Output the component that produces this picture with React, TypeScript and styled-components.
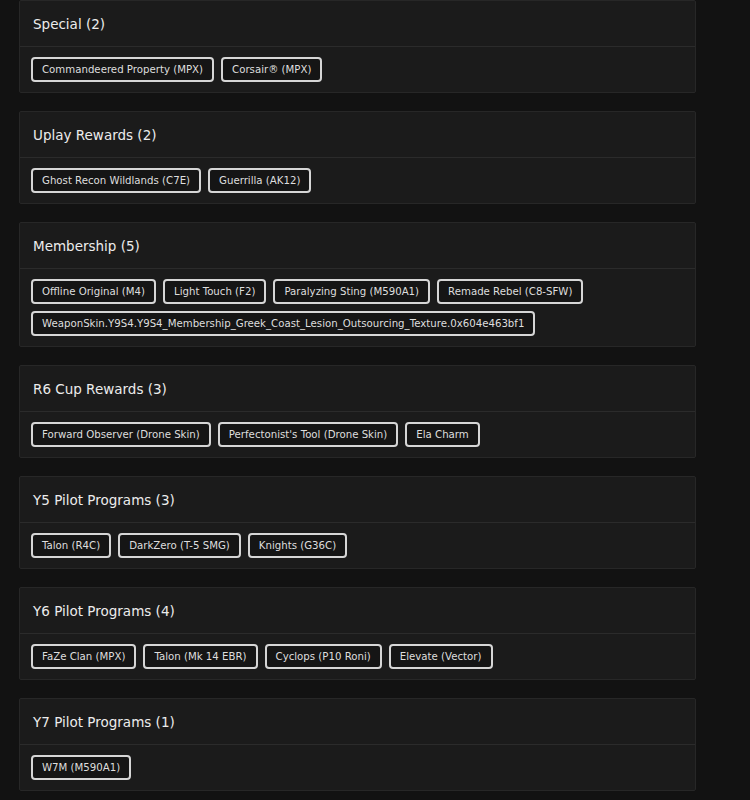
import React from "react";
import styled, { createGlobalStyle } from "styled-components";

interface Group {
  title: string;
  items: string[];
}

const groups: Group[] = [
  { title: "Special", items: ["Commandeered Property (MPX)", "Corsair® (MPX)"] },
  { title: "Uplay Rewards", items: ["Ghost Recon Wildlands (C7E)", "Guerrilla (AK12)"] },
  {
    title: "Membership",
    items: [
      "Offline Original (M4)",
      "Light Touch (F2)",
      "Paralyzing Sting (M590A1)",
      "Remade Rebel (C8-SFW)",
      "WeaponSkin.Y9S4.Y9S4_Membership_Greek_Coast_Lesion_Outsourcing_Texture.0x604e463bf1",
    ],
  },
  {
    title: "R6 Cup Rewards",
    items: ["Forward Observer (Drone Skin)", "Perfectonist's Tool (Drone Skin)", "Ela Charm"],
  },
  { title: "Y5 Pilot Programs", items: ["Talon (R4C)", "DarkZero (T-5 SMG)", "Knights (G36C)"] },
  {
    title: "Y6 Pilot Programs",
    items: ["FaZe Clan (MPX)", "Talon (Mk 14 EBR)", "Cyclops (P10 Roni)", "Elevate (Vector)"],
  },
  { title: "Y7 Pilot Programs", items: ["W7M (M590A1)"] },
];

const GlobalStyle = createGlobalStyle`
  html, body {
    margin: 0;
    background: #121212;
  }
  body {
    font-family: "DejaVu Sans", "Noto Sans", sans-serif;
    color: #e6e6e6;
  }
`;

const Page = styled.div`
  padding: 0 19px;
  display: flex;
  flex-direction: column;
  gap: 18px;
  width: 677px;
`;

const Card = styled.section`
  background: #1b1b1b;
  border: 1px solid #272727;
  border-radius: 2px;
`;

const Header = styled.header`
  height: 45px;
  display: flex;
  align-items: center;
  padding: 0 13px;
  border-bottom: 1px solid #2b2b2b;
  font-size: 13.5px;
  font-weight: 500;
  color: #ececec;
`;

const Body = styled.div`
  padding: 10px 11px;
  display: flex;
  flex-wrap: wrap;
  gap: 7px;
`;

const Tag = styled.span`
  height: 25px;
  box-sizing: border-box;
  display: inline-flex;
  align-items: center;
  padding: 0 9px;
  border: 2px solid #d6d6d6;
  border-radius: 4px;
  background: #151515;
  font-size: 10.2px;
  color: #dedede;
  white-space: nowrap;
`;

const App: React.FC = () => (
  <>
    <GlobalStyle />
    <Page>
      {groups.map((g) => (
        <Card key={g.title}>
          <Header>
            {g.title} ({g.items.length})
          </Header>
          <Body>
            {g.items.map((item) => (
              <Tag key={item}>{item}</Tag>
            ))}
          </Body>
        </Card>
      ))}
    </Page>
  </>
);

export default App;
